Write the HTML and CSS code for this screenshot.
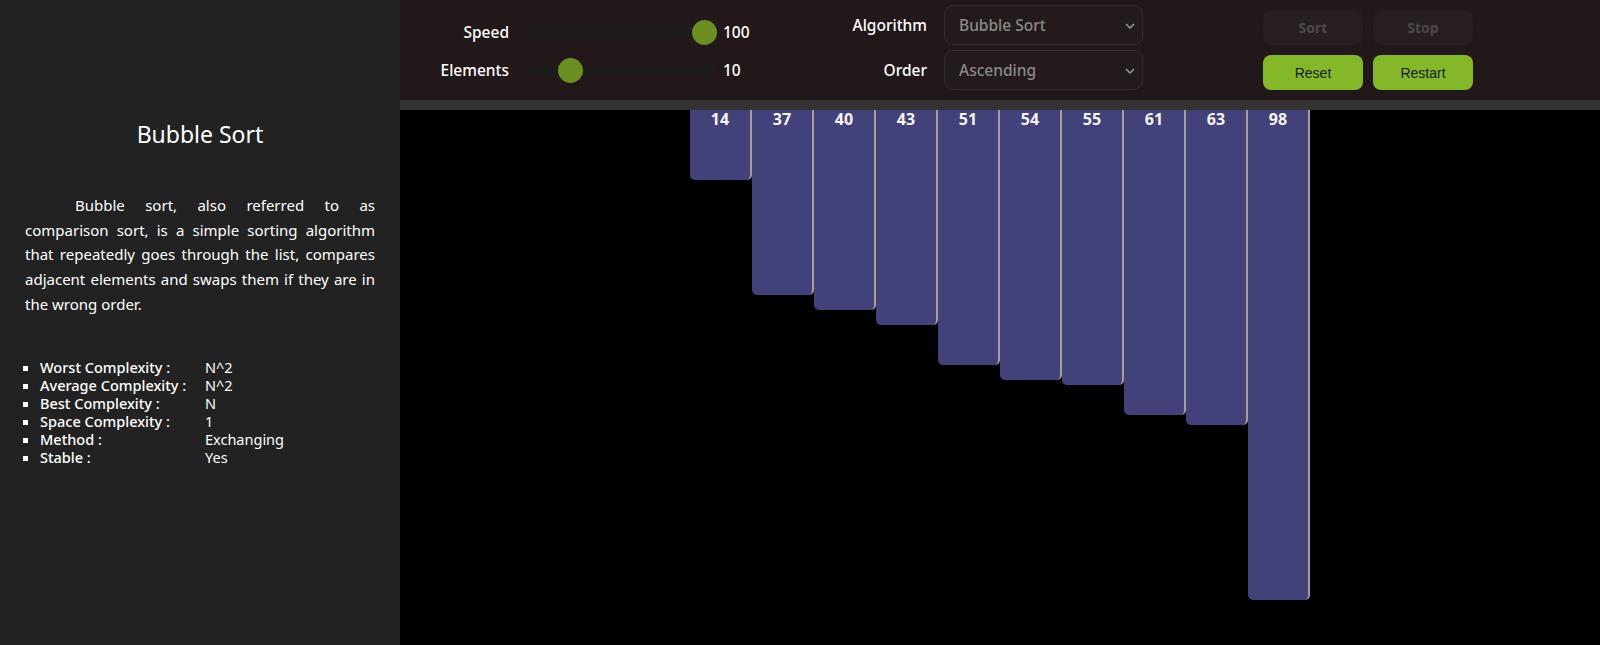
FILE: index.html
```html
<!DOCTYPE html>
<html lang="en">
<head>
<meta charset="utf-8">
<title>Sorting Visualizer</title>
<link rel="stylesheet" href="styles.css">
</head>
<body>
<div class="app">
  <aside class="sidebar">
    <h1 class="title">Bubble Sort</h1>
    <p class="desc">Bubble sort, also referred to as comparison sort, is a simple sorting algorithm that repeatedly goes through the list, compares adjacent elements and swaps them if they are in the wrong order.</p>
    <ul class="facts">
      <li><span class="k">Worst Complexity :</span><span class="v">N^2</span></li>
      <li><span class="k">Average Complexity :</span><span class="v">N^2</span></li>
      <li><span class="k">Best Complexity :</span><span class="v">N</span></li>
      <li><span class="k">Space Complexity :</span><span class="v">1</span></li>
      <li><span class="k">Method :</span><span class="v">Exchanging</span></li>
      <li><span class="k">Stable :</span><span class="v">Yes</span></li>
    </ul>
  </aside>
  <main class="main">
    <header class="toolbar">
      <div class="sliders">
        <label class="lbl">Speed</label>
        <div class="track"><span class="thumb thumb-speed"></span></div>
        <span class="val">100</span>
        <label class="lbl">Elements</label>
        <div class="track"><span class="thumb thumb-elements"></span></div>
        <span class="val">10</span>
      </div>
      <div class="selects">
        <label class="lbl">Algorithm</label>
        <div class="select"><span>Bubble Sort</span><svg class="chev" width="10" height="6" viewBox="0 0 10 6"><path d="M1 1 L5 5 L9 1" fill="none" stroke="#9a9a9a" stroke-width="1.5"/></svg></div>
        <label class="lbl">Order</label>
        <div class="select"><span>Ascending</span><svg class="chev" width="10" height="6" viewBox="0 0 10 6"><path d="M1 1 L5 5 L9 1" fill="none" stroke="#9a9a9a" stroke-width="1.5"/></svg></div>
      </div>
      <div class="buttons">
        <button class="btn btn-off">Sort</button>
        <button class="btn btn-off">Stop</button>
        <button class="btn btn-on">Reset</button>
        <button class="btn btn-on">Restart</button>
      </div>
    </header>
    <div class="divider"></div>
    <section class="stage">
      <div class="bars">
        <div class="bar" style="height:70px">14</div>
        <div class="bar" style="height:185px">37</div>
        <div class="bar" style="height:200px">40</div>
        <div class="bar" style="height:215px">43</div>
        <div class="bar" style="height:255px">51</div>
        <div class="bar" style="height:270px">54</div>
        <div class="bar" style="height:275px">55</div>
        <div class="bar" style="height:305px">61</div>
        <div class="bar" style="height:315px">63</div>
        <div class="bar" style="height:490px">98</div>
      </div>
    </section>
  </main>
</div>
</body>
</html>
```

FILE: styles.css
```css
* { box-sizing: border-box; }
html, body { margin: 0; padding: 0; height: 100%; }
body {
  font-family: "Noto Sans", "Open Sans", sans-serif;
  background: #000;
  color: #fff;
  overflow: hidden;
}
.app { display: flex; height: 645px; }

.sidebar {
  width: 400px;
  flex: 0 0 400px;
  background: #222222;
  padding: 119px 25px 0;
}
.title {
  margin: 0;
  font-size: 23px;
  line-height: 30px;
  font-weight: 400;
  text-align: center;
}
.desc {
  margin: 44px 0 0;
  font-size: 15px;
  line-height: 24.7px;
  text-align: justify;
  text-indent: 50px;
}
.facts {
  margin: 41px 0 0;
  padding: 0 0 0 15px;
  list-style: square;
  font-size: 14.5px;
  line-height: 18px;
}
.facts li { padding-left: 0; }
.k { display: inline-block; width: 165px; font-weight: 500; }
.v { font-weight: 400; }

.main { flex: 1; display: flex; flex-direction: column; }
.toolbar {
  height: 100px;
  background: #221819;
  display: flex;
  align-items: flex-start;
}
.lbl { font-size: 15.5px; font-weight: 500; text-align: right; }

.sliders {
  margin-left: 9px;
  padding-top: 13px;
  display: grid;
  grid-template-columns: 100px 193px 40px;
  grid-auto-rows: 38px;
  column-gap: 15px;
  align-items: center;
}
.sliders .val { margin-left: -9px; font-size: 15.5px; font-weight: 500; }
.track {
  position: relative;
  height: 14px;
  border-radius: 7px;
  background: #1e1b1b;
}
.thumb {
  position: absolute;
  top: -5.5px;
  width: 25px;
  height: 25px;
  border-radius: 50%;
  background: #6b8e23;
}
.thumb-speed { left: 168px; }
.thumb-elements { left: 34px; }

.selects {
  margin-left: 55px;
  padding-top: 5px;
  display: grid;
  grid-template-columns: 100px 199px;
  grid-auto-rows: 40px;
  column-gap: 17px;
  row-gap: 5px;
  align-items: center;
}
.select {
  position: relative;
  height: 40px;
  border: 1px solid #372d2d;
  border-radius: 9px;
  background: #231a1b;
  color: #8a8a8a;
  font-size: 15.5px;
  font-weight: 500;
  display: flex;
  align-items: center;
  padding-left: 14px;
}
.chev { position: absolute; right: 7px; top: 17px; }

.buttons {
  margin-left: 120px;
  padding-top: 10px;
  display: grid;
  grid-template-columns: 100px 100px;
  grid-auto-rows: 35px;
  column-gap: 10px;
  row-gap: 10px;
}
.btn {
  border: 0;
  border-radius: 8px;
  font-family: "Liberation Sans", Arial, sans-serif;
  font-size: 14px;
  padding: 0;
}
.btn-off {
  background: #261e1f;
  color: #4e4848;
  font-family: "Noto Sans", sans-serif;
  font-weight: 700;
}
.btn-on { background: #84b82a; color: #1a1a1a; }

.divider { height: 10px; background: #333333; }
.stage { flex: 1; background: #000; display: flex; justify-content: center; }
.bars { display: flex; align-items: flex-start; }
.bar {
  width: 62px;
  background: #434179;
  border-right: 2px solid #a59c9c;
  border-radius: 0 0 5px 5px;
  text-align: center;
  font-family: "Open Sans", sans-serif;
  font-weight: 700;
  font-size: 16px;
  line-height: 19px;
  padding-top: 0px;
  color: #f4f4f4;
}
```
